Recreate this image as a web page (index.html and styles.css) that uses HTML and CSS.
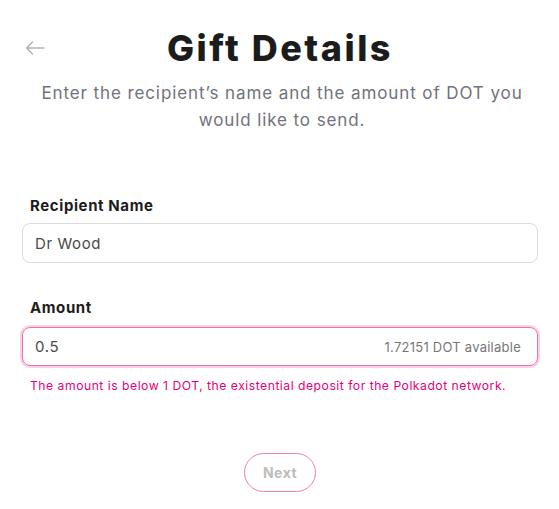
FILE: index.html
```html
<!DOCTYPE html>
<html>
<head>
<meta charset="utf-8">
<link rel="stylesheet" href="styles.css">
</head>
<body>
<main class="page">
  <header class="header">
    <button class="back" aria-label="Back">
      <svg width="20" height="14" viewBox="0 0 20 14" fill="none" stroke="#b3b3b3" stroke-width="1.4" stroke-linecap="round" stroke-linejoin="round"><path d="M19 7H1.5M7.5 1L1.5 7l6 6"/></svg>
    </button>
    <h1 class="title">Gift Details</h1>
    <span></span>
  </header>
  <p class="subtitle">Enter the recipient’s name and the amount of DOT you would like to send.</p>

  <form class="form">
    <div class="field">
      <label class="label">Recipient Name</label>
      <div class="input">Dr Wood</div>
    </div>
    <div class="field field-amount">
      <label class="label">Amount</label>
      <div class="input input-error">
        <span>0.5</span>
        <span class="avail">1.72151 DOT available</span>
      </div>
      <p class="error">The amount is below 1 DOT, the existential deposit for the Polkadot network.</p>
    </div>
    <div class="actions">
      <button type="button" class="next">Next</button>
    </div>
  </form>
</main>
</body>
</html>
```
FILE: styles.css
```css
* { box-sizing: border-box; }
html, body { margin: 0; background: #fff; }
body { font-family: Inter, "Open Sans", sans-serif; color: #1a1a1a; }
.page { padding: 26px 21px 0 22px; }
.header {
  display: grid;
  grid-template-columns: 1fr auto 1fr;
  align-items: center;
}
.back {
  justify-self: start;
  background: none; border: 0; padding: 0; margin-left: 3px;
  display: flex;
}
.title {
  margin: 0;
  font-size: 36px;
  line-height: 44px;
  font-weight: 800;
  letter-spacing: 2.5px;
  color: #1c1c1c;
}
.subtitle {
  margin: 10px auto 0;
  width: 520px;
  text-align: center;
  font-size: 17px;
  line-height: 27px;
  letter-spacing: 0.9px;
  color: #6f737b;
}
.form { margin-top: 63px; }
.field { display: flex; flex-direction: column; }
.label {
  font-size: 15px;
  font-weight: 700;
  line-height: 18px;
  letter-spacing: 0.6px;
  padding-left: 8px;
  margin-bottom: 8px;
  color: #1c1c1c;
}
.input {
  height: 40px;
  border: 1px solid #dcdcdc;
  border-radius: 8px;
  display: flex; align-items: center; justify-content: space-between;
  padding: 0 16px 0 12px;
  font-size: 15px;
  letter-spacing: 0.6px;
  color: #4a4a4a;
}
.field-amount { margin-top: 36px; }
.input-error {
  border: 1.5px solid #ec6fb0;
  box-shadow: 0 0 0 2px #fbd0e6;
  height: 39px;
  margin: 2px 0;
}
.avail { font-size: 13px; letter-spacing: 0.25px; color: #777; }
.error {
  margin: 10px 0 0 8px;
  font-size: 12.2px;
  letter-spacing: 0.5px;
  color: #e6007a;
}
.actions { display: flex; justify-content: center; margin-top: 60px; }
.next {
  width: 72px; height: 39px;
  border: 1px solid #ec7fb8;
  border-radius: 20px;
  background: #fff;
  font-family: inherit;
  font-weight: 700;
  font-size: 14px;
  letter-spacing: 0.5px;
  color: #bcbcbc;
}
```
